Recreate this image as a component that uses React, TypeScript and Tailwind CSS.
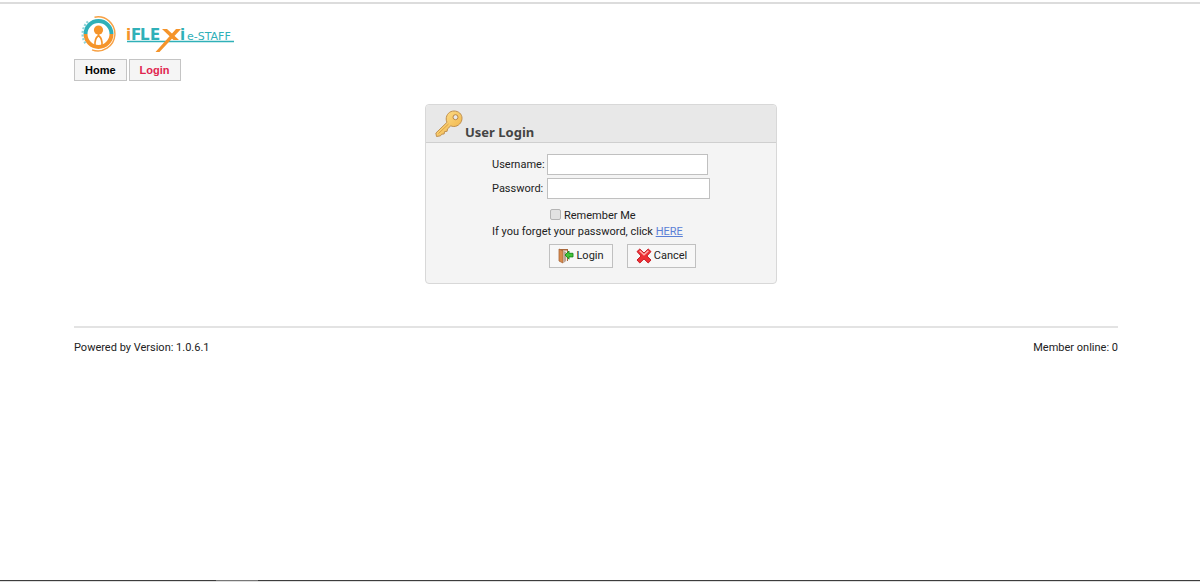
import * as React from "react";

function Emblem() {
  return (
    <svg width="37" height="38" viewBox="0 0 37 38" fill="none" aria-hidden="true">
      <path d="M14.5 2.2A17 17 0 1 1 12 34.8" stroke="#f7a145" strokeWidth="1.4" />
      <path d="M5.5 19a13 13 0 0 1 26 0" stroke="#2fb0b8" strokeWidth="4" />
      <path d="M5.5 19a13 13 0 0 0 26 0" stroke="#f5942a" strokeWidth="4" />
      <circle cx="18.5" cy="15" r="4.6" fill="#f5942a" />
      <path d="M18.5 18v4M18 21c-2.600 2-3.400 5-3 10M19 21c2.600 2 3.400 5 3 10" stroke="#f5942a" strokeWidth="1.700" />
      <path d="M8 6.500A17 17 0 0 0 6 29" stroke="#8fd4d8" strokeWidth="2.400" strokeDasharray="2 1.600" />
    </svg>
  );
}

function Wordmark() {
  return (
    <svg width="112" height="38" viewBox="0 0 112 38" role="img" aria-label="iFLEXi e-STAFF">
      <path d="M2 26.500H109" stroke="#2fb0b8" strokeWidth="1.400" />
      <g fontFamily="DejaVu Sans, sans-serif" fontWeight="bold" fontSize="15">
        <text x="1" y="25" fill="#f5942a">i</text>
        <text x="6" y="25" fill="#2fb0b8">F</text>
        <text x="15" y="25" fill="#2fb0b8">L</text>
        <text x="25" y="25" fill="#2fb0b8">E</text>
        <text x="55" y="25" fill="#2fb0b8">i</text>
      </g>
      <path d="M37 14h5l12 11h-5.500zM51 14h5L34.500 37H30.500z" fill="#f5942a" />
      <text x="62" y="25" fill="#2fb0b8" fontFamily="DejaVu Sans, sans-serif" fontSize="11">e-STAFF</text>
    </svg>
  );
}

function KeyIcon() {
  return (
    <svg width="28" height="28" viewBox="0 0 28 28" aria-hidden="true">
      <defs>
        <linearGradient id="gold" x1="0" y1="0" x2="1" y2="1">
          <stop offset="0" stopColor="#ffe596" />
          <stop offset="1" stopColor="#efae3e" />
        </linearGradient>
      </defs>
      <path
        d="M19 1c4.500 0 8 3 8 7.200 0 4.500-3.700 8.300-8.200 8.300-1.300 0-2.200-.3-3-.7l-3.300 3.100-.4 2.400-2.600.3-.3 2.300-2.500.3-1.200 1.600-4 .7-.6-3.500L12 12.300c-.5-1-.8-2-.8-3.300C11.200 4.500 14.600 1 19 1z"
        fill="url(#gold)"
        stroke="#c0904f"
        strokeWidth="1"
      />
      <path d="M3.500 23.500 13.500 14" stroke="#dba040" strokeWidth="1" />
      <circle cx="20.500" cy="7.200" r="2.500" fill="#e8e8e8" stroke="#b98543" strokeWidth="1" />
    </svg>
  );
}

function DoorIcon() {
  return (
    <svg width="16" height="16" viewBox="0 0 16 16" aria-hidden="true">
      <path d="M1 1h9v12H1z" fill="#a9683c" />
      <path d="M5 2.500h4V13H5z" fill="#f3ece4" />
      <path d="M1 1l4 2v12l-4-2z" fill="#d98a4b" stroke="#a8673a" strokeWidth=".8" />
      <path d="M5.500 3 8 4v9l-2.500 2z" fill="#b9a496" />
      <path d="M7 7 11 3v2.300h4v3.600h-4v2.300z" fill="#43c438" stroke="#16861c" strokeWidth=".9" />
    </svg>
  );
}

function CrossIcon() {
  return (
    <svg width="16" height="16" viewBox="0 0 16 16" aria-hidden="true">
      <path
        d="M3.800 1 8 5l4.200-4L15 3.600 10.900 8l4.100 4-2.800 3L8 10.900 3.800 15 1 12l4.100-4L1 3.600z"
        fill="#ee2f35"
        stroke="#c81e26"
        strokeWidth="1"
        strokeLinejoin="round"
      />
      <path d="M3.600 2.700 8 6.800l4.400-4.100" fill="none" stroke="#ffb0ad" strokeWidth="1.400" />
    </svg>
  );
}

export default function App() {
  const [username, setUsername] = React.useState("");
  const [password, setPassword] = React.useState("");
  const [remember, setRemember] = React.useState(false);

  const reset = () => {
    setUsername("");
    setPassword("");
    setRemember(false);
  };

  return (
    <div className="flex min-h-screen flex-col bg-white pt-0.5 font-[Roboto,sans-serif] text-[11px] leading-4 text-[#222]">
      <div className="border-t-2 border-[#dcdcdc]" />

      <header className="pl-[74px] pt-[11px]">
        <a href="#" className="flex w-fit items-center gap-2 pl-1.5">
          <Emblem />
          <Wordmark />
        </a>
        <nav className="mt-1.5 flex gap-0.5 font-['Liberation_Sans',sans-serif] text-[11px] font-bold">
          <a href="#" className="border border-[#c4c4c4] bg-[#f5f5f5] px-2.5 py-0.5 text-black">
            Home
          </a>
          <a href="#" className="border border-[#c4c4c4] bg-[#f5f5f5] px-2.5 py-0.5 text-[#e0244f]">
            Login
          </a>
        </nav>
      </header>

      <main className="mt-[23px] flex justify-center pl-0.5">
        <form
          onSubmit={(e) => e.preventDefault()}
          className="w-[352px] rounded border border-[#d8d8d8] bg-[#f4f4f4] pb-[15px]"
        >
          <div className="flex h-[38px] items-end gap-0.5 rounded-t border-b border-[#cfcfcf] bg-[#e8e8e8] pl-[9px]">
            <div className="pb-1">
              <KeyIcon />
            </div>
            <h1 className="pb-0.5 font-['Noto_Sans',sans-serif] text-[13px] font-bold text-[#444]">User Login</h1>
          </div>

          <div className="pl-[66px] pt-[11px]">
            <div className="grid grid-cols-[55px_1fr] items-center gap-y-[3px]">
              <label htmlFor="username">Username:</label>
              <input
                id="username"
                value={username}
                onChange={(e) => setUsername(e.target.value)}
                className="h-[21px] w-[161px] border border-[#c0c0c0] bg-white px-1 outline-none"
              />
              <label htmlFor="password">Password:</label>
              <input
                id="password"
                type="password"
                value={password}
                onChange={(e) => setPassword(e.target.value)}
                className="h-[21px] w-[163px] border border-[#c0c0c0] bg-white px-1 outline-none"
              />
            </div>

            <div className="mt-2 flex items-start gap-[3px] pl-[58px]">
              <input
                id="remember"
                type="checkbox"
                checked={remember}
                onChange={(e) => setRemember(e.target.checked)}
                className="mt-0.5 size-[11px] appearance-none rounded-xs border border-[#b4b4b4] bg-[#e2e2e2] checked:bg-[#5b7fd6]"
              />
              <label htmlFor="remember" className="pt-px">
                Remember Me
              </label>
            </div>
            <p>
              If you forget your password, click{" "}
              <a href="#" className="text-[#5b7fd6] underline">
                HERE
              </a>
            </p>

            <div className="mt-1 flex gap-3.5 pl-[57px]">
              <button type="submit" className="flex h-6 w-16 items-center justify-center gap-0.5 border border-[#c0c0c0] bg-[#f7f7f7]">
                <DoorIcon />
                Login
              </button>
              <button
                type="button"
                onClick={reset}
                className="flex h-6 w-[69px] items-center justify-center gap-0.5 border border-[#c0c0c0] bg-[#f7f7f7]"
              >
                <CrossIcon />
                Cancel
              </button>
            </div>
          </div>
        </form>
      </main>

      <footer className="ml-[74px] mr-[82px] mt-[42px] flex justify-between border-t-2 border-[#e3e3e3] pt-3">
        <span>Powered by Version: 1.0.6.1</span>
        <span>Member online: 0</span>
      </footer>

      <div className="mt-auto flex border-b border-[#dedede]">
        <div className="h-px w-[18%] bg-[#3c3c3c]" />
        <div className="h-px w-[42px] bg-[#777]" />
        <div className="h-px flex-1 bg-[#3c3c3c]" />
      </div>
    </div>
  );
}
